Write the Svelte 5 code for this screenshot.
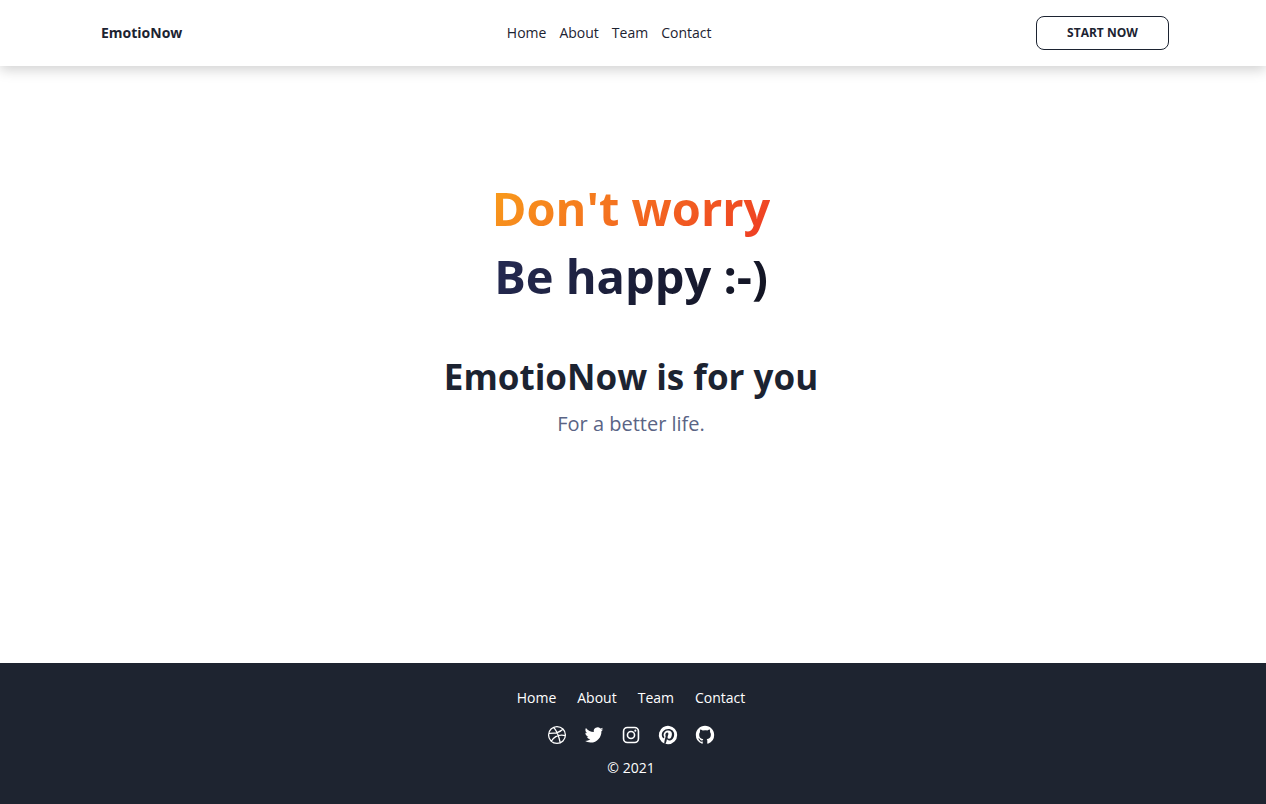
<script>
  const links = ['Home', 'About', 'Team', 'Contact'];
  const social = [
    { name: 'Dribbble', line: true, d: 'M12 2.8a9.2 9.2 0 1 0 0 18.4 9.2 9.2 0 0 0 0-18.4zM8.5 3.6c3.2 4.1 5.6 9.2 7 16.8M3 10.3c6.2.1 12.2-1 15.5-4.8M5.8 18.8c3-4.9 7.8-7.7 15.4-6.1' },
    { name: 'Twitter', d: 'M22.162 5.656a8.384 8.384 0 0 1-2.402.658A4.196 4.196 0 0 0 21.6 4c-.82.488-1.719.83-2.656 1.015a4.182 4.182 0 0 0-7.126 3.814 11.874 11.874 0 0 1-8.62-4.37 4.168 4.168 0 0 0-.566 2.103c0 1.45.738 2.731 1.86 3.481a4.168 4.168 0 0 1-1.894-.523v.052a4.185 4.185 0 0 0 3.355 4.101 4.21 4.21 0 0 1-1.89.072A4.185 4.185 0 0 0 7.97 16.65a8.394 8.394 0 0 1-6.191 1.732 11.83 11.83 0 0 0 6.41 1.88c7.693 0 11.9-6.373 11.9-11.9 0-.18-.005-.362-.013-.54a8.496 8.496 0 0 0 2.087-2.165z' },
    { name: 'Instagram', d: 'M16 3H8a5 5 0 0 0-5 5v8a5 5 0 0 0 5 5h8a5 5 0 0 0 5-5V8a5 5 0 0 0-5-5zm3.25 13A3.25 3.25 0 0 1 16 19.25H8A3.25 3.25 0 0 1 4.75 16V8A3.25 3.25 0 0 1 8 4.75h8A3.25 3.25 0 0 1 19.25 8zM12 7.25a4.75 4.75 0 1 0 0 9.5 4.75 4.75 0 0 0 0-9.5zm0 7.75a3 3 0 1 1 0-6 3 3 0 0 1 0 6zm4.75-8.9a1.15 1.15 0 1 0 0 2.3 1.15 1.15 0 0 0 0-2.3z' },
    { name: 'Pinterest', d: 'M13.37 2.094A10.003 10.003 0 0 0 8.002 21.17a7.757 7.757 0 0 1 .163-2.293c.185-.839 1.296-5.463 1.296-5.463a3.739 3.739 0 0 1-.324-1.577c0-1.485.857-2.593 1.923-2.593a1.334 1.334 0 0 1 1.342 1.508c0 .9-.578 2.262-.88 3.54a1.544 1.544 0 0 0 1.575 1.923c1.898 0 3.17-2.431 3.17-5.301 0-2.2-1.457-3.848-4.143-3.848a4.746 4.746 0 0 0-4.93 4.794 2.96 2.96 0 0 0 .648 1.97.48.48 0 0 1 .162.554c-.46.184-.162.623-.208.784a.354.354 0 0 1-.51.254c-1.384-.554-2.036-2.077-2.036-3.816 0-2.847 2.384-6.255 7.154-6.255 3.796 0 6.32 2.777 6.32 5.747 0 3.909-2.177 6.848-5.394 6.848a2.861 2.861 0 0 1-2.454-1.246s-.578 2.316-.692 2.754a8.026 8.026 0 0 1-1.019 2.131c.923.28 1.882.42 2.846.416a9.988 9.988 0 0 0 9.996-10.003 10.002 10.002 0 0 0-8.635-9.903z' },
    { name: 'GitHub', d: 'M12 2C6.475 2 2 6.475 2 12a9.994 9.994 0 0 0 6.838 9.488c.5.087.687-.213.687-.476 0-.237-.013-1.024-.013-1.862-2.512.463-3.162-.612-3.362-1.175-.113-.288-.6-1.175-1.025-1.413-.35-.187-.85-.65-.013-.662.788-.013 1.35.725 1.538 1.025.9 1.512 2.338 1.087 2.912.825.088-.65.35-1.087.638-1.337-2.225-.25-4.55-1.113-4.55-4.938 0-1.088.387-1.987 1.025-2.688-.1-.25-.45-1.275.1-2.65 0 0 .837-.262 2.75 1.026a9.28 9.28 0 0 1 2.5-.338c.85 0 1.7.112 2.5.337 1.912-1.3 2.75-1.024 2.75-1.024.55 1.375.2 2.4.1 2.65.637.7 1.025 1.587 1.025 2.687 0 3.838-2.337 4.688-4.562 4.938.362.312.675.912.675 1.85 0 1.337-.013 2.412-.013 2.75 0 .262.188.574.688.474A10.016 10.016 0 0 0 22 12c0-5.525-4.475-10-10-10z' }
  ];
</script>

<div class="page">
  <header>
    <a class="brand" href="#home">EmotioNow</a>
    <nav aria-label="Main">
      {#each links as link}<a href={'#' + link.toLowerCase()}>{link}</a>{/each}
    </nav>
    <button type="button">START NOW</button>
  </header>

  <main>
    <h1><span class="warm">Don't worry</span><span class="night">Be happy :-)</span></h1>
    <h2>EmotioNow is for you</h2>
    <p>For a better life.</p>
  </main>

  <footer>
    <nav aria-label="Footer">
      {#each links as link}<a href={'#' + link.toLowerCase()}>{link}</a>{/each}
    </nav>
    <div class="social">
      {#each social as item}
        <a href={'#' + item.name.toLowerCase()} aria-label={item.name}>
          <svg class:line={item.line} viewBox="0 0 24 24" aria-hidden="true"><path d={item.d} /></svg>
        </a>
      {/each}
    </div>
    <small>© 2021</small>
  </footer>
</div>

<style>
  :global(body) { margin: 0; }
  .page {
    min-height: 100vh;
    display: flex;
    flex-direction: column;
    font-family: "Open Sans", sans-serif;
    font-size: 14px;
    line-height: 20px;
    color: #1c2331;
    background: #fff;
  }
  a { color: inherit; text-decoration: none; }
  header {
    display: flex;
    align-items: center;
    justify-content: space-between;
    padding: 16px 97px 16px 101px;
    box-shadow: 0 4px 12px rgba(0, 0, 0, 0.18);
  }
  .brand { font-weight: 700; }
  nav { display: flex; gap: 13px; }
  button {
    width: 133px;
    height: 34px;
    padding: 0 0 2px;
    border: 1px solid #1c2331;
    border-radius: 8px;
    background: #fff;
    color: inherit;
    font: 700 12px "Open Sans", sans-serif;
  }
  main {
    flex: 1;
    display: flex;
    flex-direction: column;
    align-items: center;
    padding: 108px 20px 0 16px;
    text-align: center;
  }
  h1, h2, p { margin: 0; }
  h1 {
    display: flex;
    flex-direction: column;
    align-items: center;
    font-size: 47px;
    line-height: 68px;
    font-weight: 700;
  }
  h1 span { background-clip: text; -webkit-background-clip: text; color: transparent; }
  .warm { background-image: linear-gradient(135deg, #f9a01b, #ee3a24); }
  .night { background-image: linear-gradient(135deg, #262b55, #11131f); }
  h2 { margin-top: 40px; font-size: 35px; line-height: 54px; font-weight: 700; }
  p { font-size: 20px; line-height: 40px; color: #5a6485; }
  footer {
    display: flex;
    flex-direction: column;
    align-items: center;
    padding: 25px 20px 26px 16px;
    background: #1e2430;
    color: #fff;
  }
  footer nav { gap: 21px; }
  .social { display: flex; gap: 15px; margin: 16px 0 12px; }
  .social a { display: flex; }
  svg { width: 22px; height: 22px; fill: currentColor; }
  .line { fill: none; stroke: currentColor; stroke-width: 1.4; }
  small { font-size: 14px; }
</style>
